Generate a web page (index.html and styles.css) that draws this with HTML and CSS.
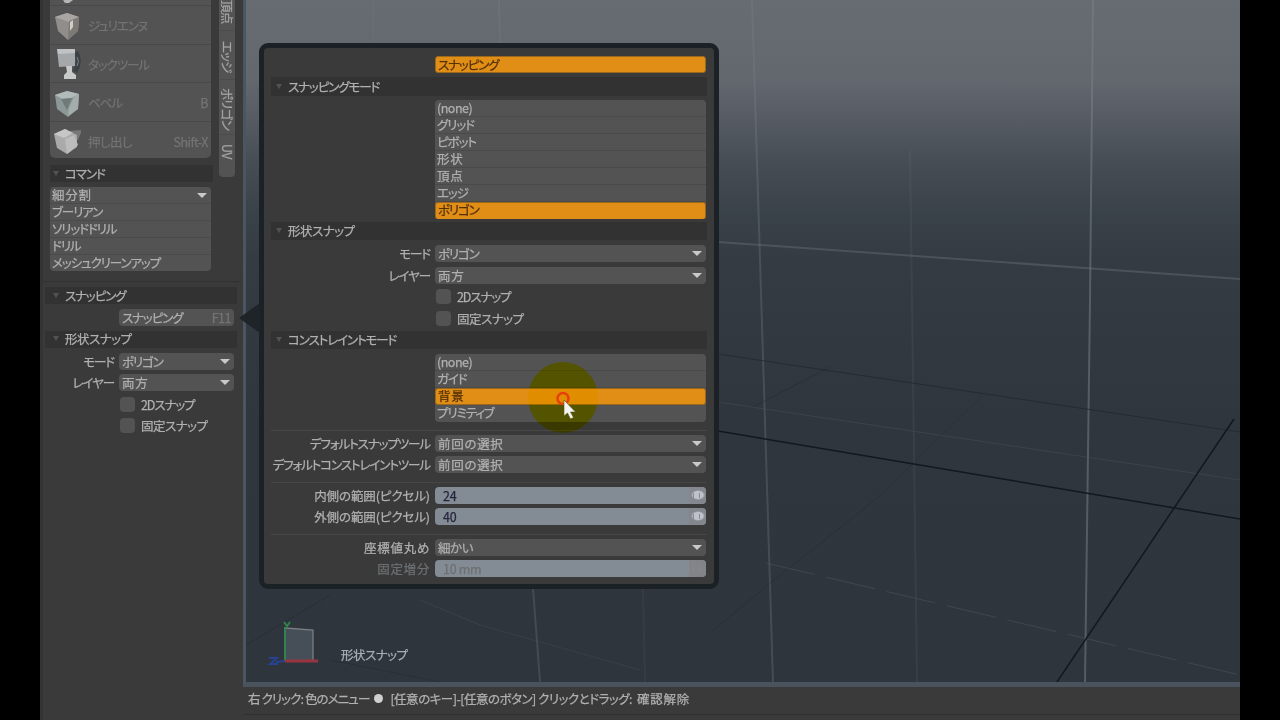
FILE: index.html
```html
<!DOCTYPE html>
<html lang="ja">
<head>
    <meta charset="utf-8">
    <title>スナッピング</title>
    <link rel="stylesheet" href="styles.css">
</head>
<body>
<div class="app">
    <div class="sidebar">
        <div class="top">
            <div class="tools">
                <div class="tool first">
                    <svg width="28" height="6" viewBox="0 0 28 6"><path d="M10 0h10l-4 3h-4z" fill="#b5b5b5"/></svg>
                </div>
                <div class="tool">
                    <svg width="28" height="30" viewBox="0 0 28 30"><path d="M2 6l12-4 12 4-1 14-10 9-10-9z" fill="#918d8b"/><path d="M2 6l12-4 12 4-10 5z" fill="#aaa6a3"/><path d="M16 10l10-4-1 14-10 9z" fill="#7d7976"/><path d="M17 11l3-2v7l-3 4z" fill="#d0cbc5"/></svg>
                    <span>ジュリエンヌ</span>
                </div>
                <div class="tool">
                    <svg width="28" height="34" viewBox="0 0 28 34"><path d="M23 5q5 10-1 20" stroke="#3b4247" stroke-width="5" fill="none"/><path d="M4 2h18v17l-16 1z" fill="#a5a8aa"/><path d="M4 2h18v4l-17 1z" fill="#c0c2c3"/><path d="M13 19h6v6l4 3v4H11v-4l3-3z" fill="#c8c9c9"/><path d="M24 10q3 4 0 9" stroke="#7b8386" fill="none"/></svg>
                    <span>タックツール</span>
                </div>
                <div class="tool">
                    <svg width="28" height="30" viewBox="0 0 28 30"><path d="M2 7l12-4 12 3-1 15-10 8-11-8z" fill="#8b9897"/><path d="M2 7l12-4 12 3-8 4-8 1z" fill="#b3baba"/><path d="M8 11l11-1-5 12z" fill="#6f7a79"/><path d="M21 9l5-3-1 15-10 7 1-8z" fill="#a3adac"/></svg>
                    <span>ベベル</span><em>B</em>
                </div>
                <div class="tool">
                    <svg width="28" height="30" viewBox="0 0 28 30"><path d="M16 4l13-1-4 10-8 2z" fill="#777"/><path d="M1 7l11-5 12 6v12l-10 7-10-6z" fill="#aaa"/><path d="M1 7l11-5 8 4-9 5z" fill="#c6c6c6"/><path d="M12 12l9-4 4 10-11 9z" fill="#bcbcbc"/></svg>
                    <span class="same">押し出し</span><em>Shift-X</em>
                </div>
            </div>
            <div class="tabs">
                <div class="tab t1">頂点</div>
                <div class="tab t2">エッジ</div>
                <div class="tab t3">ポリゴン</div>
                <div class="tab t4">UV</div>
            </div>
        </div>
        <div class="head short"><i></i>コマンド</div>
        <div class="list commands">
            <div class="select wide">細分割</div>
            <div>ブーリアン</div>
            <div>ソリッドドリル</div>
            <div>ドリル</div>
            <div>メッシュクリーンアップ</div>
        </div>
        <div class="snap">
            <div class="head"><i></i>スナッピング</div>
            <div class="row snap-btn"><label></label><div class="field">スナッピング<em>F11</em></div></div>
            <div class="head same"><i></i>形状スナップ</div>
            <div class="row"><label>モード</label><div class="field select">ポリゴン</div></div>
            <div class="row"><label>レイヤー</label><div class="field select wide">両方</div></div>
            <div class="row"><label></label><div class="check"><b></b>2Dスナップ</div></div>
            <div class="row"><label></label><div class="check same"><b></b>固定スナップ</div></div>
        </div>
    </div>

    <div class="main">
        <div class="viewport">
            <svg class="grid" width="994" height="682" viewBox="246 0 994 682">
                <g fill="none" stroke="#7c838a" stroke-opacity=".3" stroke-width="2">
                    <path d="M752 0L773 682"/>
                    <path d="M1093 0L1090 300L1085 682" stroke-opacity=".5"/>
                    <path d="M910 150L917 682" stroke-opacity=".12"/>
                    <path d="M499 0L500 43M533 588L540 682" stroke-opacity=".28"/>
                    <path d="M373 0V43M643 588L645 682" stroke-opacity=".1"/>
                    <path d="M718 242L1240 279" stroke-opacity=".32"/>
                </g>
                <g fill="none" stroke="#59606a" stroke-opacity=".4">
                    <path d="M718 402L1240 480" stroke-opacity=".3"/>
                    <path d="M766 563L1240 675" stroke-dasharray="50 12"/>
                    <path d="M420 600L480 625L640 670" stroke-opacity=".25"/>
                </g>
                <g fill="none" stroke="#20272e" stroke-opacity=".7">
                    <path d="M718 354L1240 432"/>
                    <path d="M710 633L768 585L875 500L982 396" stroke-opacity=".35"/>
                    <path d="M246 645L330 595M330 660L440 682" stroke-opacity=".4"/>
                    <path d="M753 407L830 367" stroke-opacity=".4"/>
                </g>
                <path d="M718 431L1240 519M1057 682L1234 419" fill="none" stroke="#111820" stroke-width="1.5"/>
                <!-- axis widget -->
                <path d="M285 628l28 2v32h-28z" fill="#464f58"/>
                <path d="M285 628l28 2v30" fill="none" stroke="#777f84" stroke-width="1.3"/>
                <path d="M285 661V627M284 622l3 4 3-4" fill="none" stroke="#32844a" stroke-width="2"/>
                <path d="M285 661h33" stroke="#98343f" stroke-width="3"/>
                <path d="M285 661l-9 1M269 658h8l-7 6h8" fill="none" stroke="#284293" stroke-width="2"/>
            </svg>
            <div class="caption same">形状スナップ</div>
        </div>
        <div class="status"><span class="s1">右 クリック: 色のメニュー</span><span class="dot"></span><span class="s2">[任意のキー]-[任意のボタン] クリックとドラッグ:</span><span class="s3">確認解除</span></div>
    </div>

    <div class="popup">
        <div class="row title"><label></label><div class="field on">スナッピング</div></div>
        <div class="head"><i></i>スナッピングモード</div>
        <div class="row modes"><label></label>
            <div class="list">
                <div class="same">(none)</div>
                <div>グリッド</div>
                <div>ピボット</div>
                <div class="wide">形状</div>
                <div class="wide">頂点</div>
                <div>エッジ</div>
                <div class="on">ポリゴン</div>
            </div>
        </div>
        <div class="head same"><i></i>形状スナップ</div>
        <div class="row"><label>モード</label><div class="field select">ポリゴン</div></div>
        <div class="row"><label>レイヤー</label><div class="field select wide">両方</div></div>
        <div class="row"><label></label><div class="check"><b></b>2Dスナップ</div></div>
        <div class="row"><label></label><div class="check same"><b></b>固定スナップ</div></div>
        <div class="head"><i></i>コンストレイントモード</div>
        <div class="row constraints"><label></label>
            <div class="list">
                <div class="same">(none)</div>
                <div>ガイド</div>
                <div class="on wide">背景</div>
                <div>プリミティブ</div>
            </div>
        </div>
        <hr>
        <div class="row"><label>デフォルトスナップツール</label><div class="field select wide">前回の選択</div></div>
        <div class="row"><label>デフォルトコンストレイントツール</label><div class="field select wide">前回の選択</div></div>
        <hr>
        <div class="row"><label class="range">内側の範囲(ピクセル)</label><div class="field num">24<u></u></div></div>
        <div class="row"><label class="range">外側の範囲(ピクセル)</label><div class="field num">40<u></u></div></div>
        <hr>
        <div class="row"><label class="wide">座標値丸め</label><div class="field select same">細かい</div></div>
        <div class="row off"><label class="wide">固定増分</label><div class="field num">10 mm<u></u></div></div>
    </div>
    <div class="arrow"></div>
    <div class="halo"></div>
    <svg class="cursor" width="24" height="32" viewBox="0 0 24 32">
        <circle cx="8" cy="7.500" r="5.500" fill="none" stroke="#e8400c" stroke-width="2.600"/>
        <path d="M9 9v16l3.500-3 3 6 3-1.500-3-5.500h5z" fill="#f4f4f4" stroke="#55550f" stroke-width=".6"/>
    </svg>
</div>
</body>
</html>
```
FILE: styles.css
```css
* {
  box-sizing: border-box;
}
body {
  margin: 0;
  background: #000;
  color: #b0b0b0;
  font: 12.5px/17px "Noto Sans CJK JP", sans-serif;
  font-feature-settings: "palt";
  letter-spacing: -1.1px;
  -webkit-text-stroke: 0.25px;
  white-space: nowrap;
}
.same {
  letter-spacing: -0.5px;
}
.wide {
  letter-spacing: 0.7px;
}
.range {
  letter-spacing: -0.1px;
}
em {
  font-style: normal;
  margin-left: auto;
  color: #747474;
  letter-spacing: -0.5px;
}
.app {
  position: relative;
  display: flex;
  width: 1200px;
  height: 720px;
  margin: 0 auto;
  overflow: hidden;
  background: #3a3a3a;
}

/* left panel */
.sidebar {
  width: 203px;
  border-left: 3px solid #343434;
}
.top {
  display: flex;
  justify-content: space-between;
  height: 177px;
  padding: 0 8px 0 7px;
}
.tools {
  width: 161px;
  height: 158px;
  border-radius: 0 0 5px 5px;
  background: #535353;
}
.tool {
  display: flex;
  align-items: center;
  height: 38.5px;
  padding: 2px 3px 0;
  border-bottom: 1px solid #494949;
  color: #737373;
}
.tool:last-child {
  border-bottom: 0;
}
.tool.first {
  height: 6px;
  padding-top: 0;
}
.tool span {
  margin-left: 7px;
}
.tabs {
  width: 16px;
  height: 177px;
  border-radius: 0 0 4px 4px;
  background: #535353;
}
.tab {
  writing-mode: vertical-rl;
  text-orientation: sideways;
  line-height: 16px;
  letter-spacing: -0.8px;
  color: #a4a4a4;
  border-bottom: 1px solid #4b4b4b;
}
.t1 { height: 31px; }
.t2 { height: 49px; padding-top: 10px; }
.t3 { height: 55px; padding-top: 8px; }
.t4 { padding-top: 9px; border: 0; }
.head {
  display: flex;
  align-items: center;
  height: 17px;
  padding: 0 0 1px 17px;
  background: #323232;
}
.head i {
  width: 0;
  margin: 0 6px 0 -12px;
  border: 3px solid transparent;
  border-top: 5px solid #535353;
  border-bottom: 0;
}
.head.short {
  width: 163px;
  margin: -12px 0 5px 7px;
  padding-left: 15px;
}
.list {
  border-radius: 4px;
  background: #535353;
}
.list div {
  height: 17px;
  padding-left: 2px;
  border-bottom: 1px solid #4a4a4a;
  line-height: 15px;
}
.list div:last-child {
  border-bottom: 0;
}
.commands {
  width: 161px;
  height: 84px;
  margin-left: 7px;
}
.select {
  position: relative;
}
.select::after {
  content: "";
  position: absolute;
  top: 6px;
  right: 4px;
  border: 5px solid transparent;
  border-top-color: #c9c9c9;
  border-bottom: 0;
}
.snap {
  width: 196px;
  margin-top: 10px;
  padding: 5px 2px 0 2px;
  border-top: 1px solid #303030;
}
.snap .head {
  margin-bottom: 5px;
  padding-left: 20px;
}
.row {
  display: grid;
  grid-template-columns: 69px 115px;
  gap: 5px;
  height: 17px;
  margin-bottom: 4.5px;
}
.row label {
  display: flex;
  justify-content: flex-end;
}
.field {
  display: flex;
  align-items: center;
  padding: 0 3px;
  border-radius: 4px;
  background: #535353;
}
.check {
  display: flex;
  align-items: center;
}
.check b {
  width: 15px;
  height: 15px;
  margin: 0 6px 0 1px;
  border-radius: 4px;
  background: #535353;
}

/* 3D view */
.main {
  width: 997px;
}
.viewport {
  position: relative;
  height: 687px;
  border-left: 3px solid #4b5663;
  border-bottom: 5px solid #4a525e;
  background: linear-gradient(#676b72, #63676e 80px, #565b63 120px, #454c54 165px, #394149 215px, #343b43 260px, #30363e 420px, #2e353c);
}
.grid {
  display: block;
}
.caption {
  position: absolute;
  left: 95px;
  top: 646px;
  color: #a9aeb2;
}
.status {
  display: flex;
  align-items: center;
  height: 28px;
  padding: 0 0 5px 5px;
  border-bottom: 1px solid #303030;
}
.s1 {
  letter-spacing: -0.9px;
}
.s2 {
  letter-spacing: -0.5px;
}
.dot {
  width: 9px;
  height: 9px;
  margin: 0 7px 0 5px;
  border-radius: 50%;
  background: #d0d0d0;
}
.s3 {
  margin-left: 5px;
  letter-spacing: 0.7px;
}

/* snapping popover */
.popup {
  position: absolute;
  left: 219px;
  top: 43px;
  width: 460px;
  height: 546px;
  padding: 8px 7px 0;
  border: 5px solid #1c2125;
  border-radius: 9px;
  background: #3a3a3a;
}
.popup .row {
  grid-template-columns: 159px 271px;
}
.popup .title {
  margin-bottom: 4px;
}
.popup .head {
  height: 18px;
  margin-bottom: 5px;
}
.popup .title + .head {
  height: 19px;
  margin-bottom: 4px;
}
.popup .modes {
  height: 118px;
  margin-bottom: 4px;
}
.popup .constraints {
  height: 67px;
  margin-bottom: 8px;
}
.popup hr {
  height: 1px;
  margin: 8.5px 0 4px;
  border: 0;
  background: #464646;
}
.popup .on {
  padding-left: 2px;
  border: 1px solid #9a681d;
  border-radius: 3px;
  background: #e08e16;
  color: #55310a;
  line-height: 13px;
}
.popup .num {
  position: relative;
  padding-left: 8px;
  background: #838b94;
  color: #24263f;
  letter-spacing: -0.3px;
}
.num u {
  width: 17px;
  height: 17px;
  margin: 0 -3px 0 auto;
  border-radius: 0 4px 4px 0;
  background: radial-gradient(ellipse 7px 5px at 9px 8px, #bfc3c9 70%, #85878f);
}
.num u::after {
  content: "";
  position: absolute;
  right: 6px;
  top: 6px;
  width: 5px;
  height: 5px;
  border: solid #858b93;
  border-width: 0 1px;
}
.off label,
.popup .off .num {
  color: #6d7073;
}
.off .num u {
  background: #83848a;
}
.arrow {
  position: absolute;
  left: 199px;
  top: 303px;
  border: 15px solid transparent;
  border-left: 0;
  border-right: 21px solid #1f2429;
}
.halo {
  position: absolute;
  left: 488px;
  top: 362px;
  width: 70px;
  height: 71px;
  border-radius: 50%;
  background: #ffff00;
  mix-blend-mode: multiply;
}
.cursor {
  position: absolute;
  left: 515px;
  top: 391px;
}
```
